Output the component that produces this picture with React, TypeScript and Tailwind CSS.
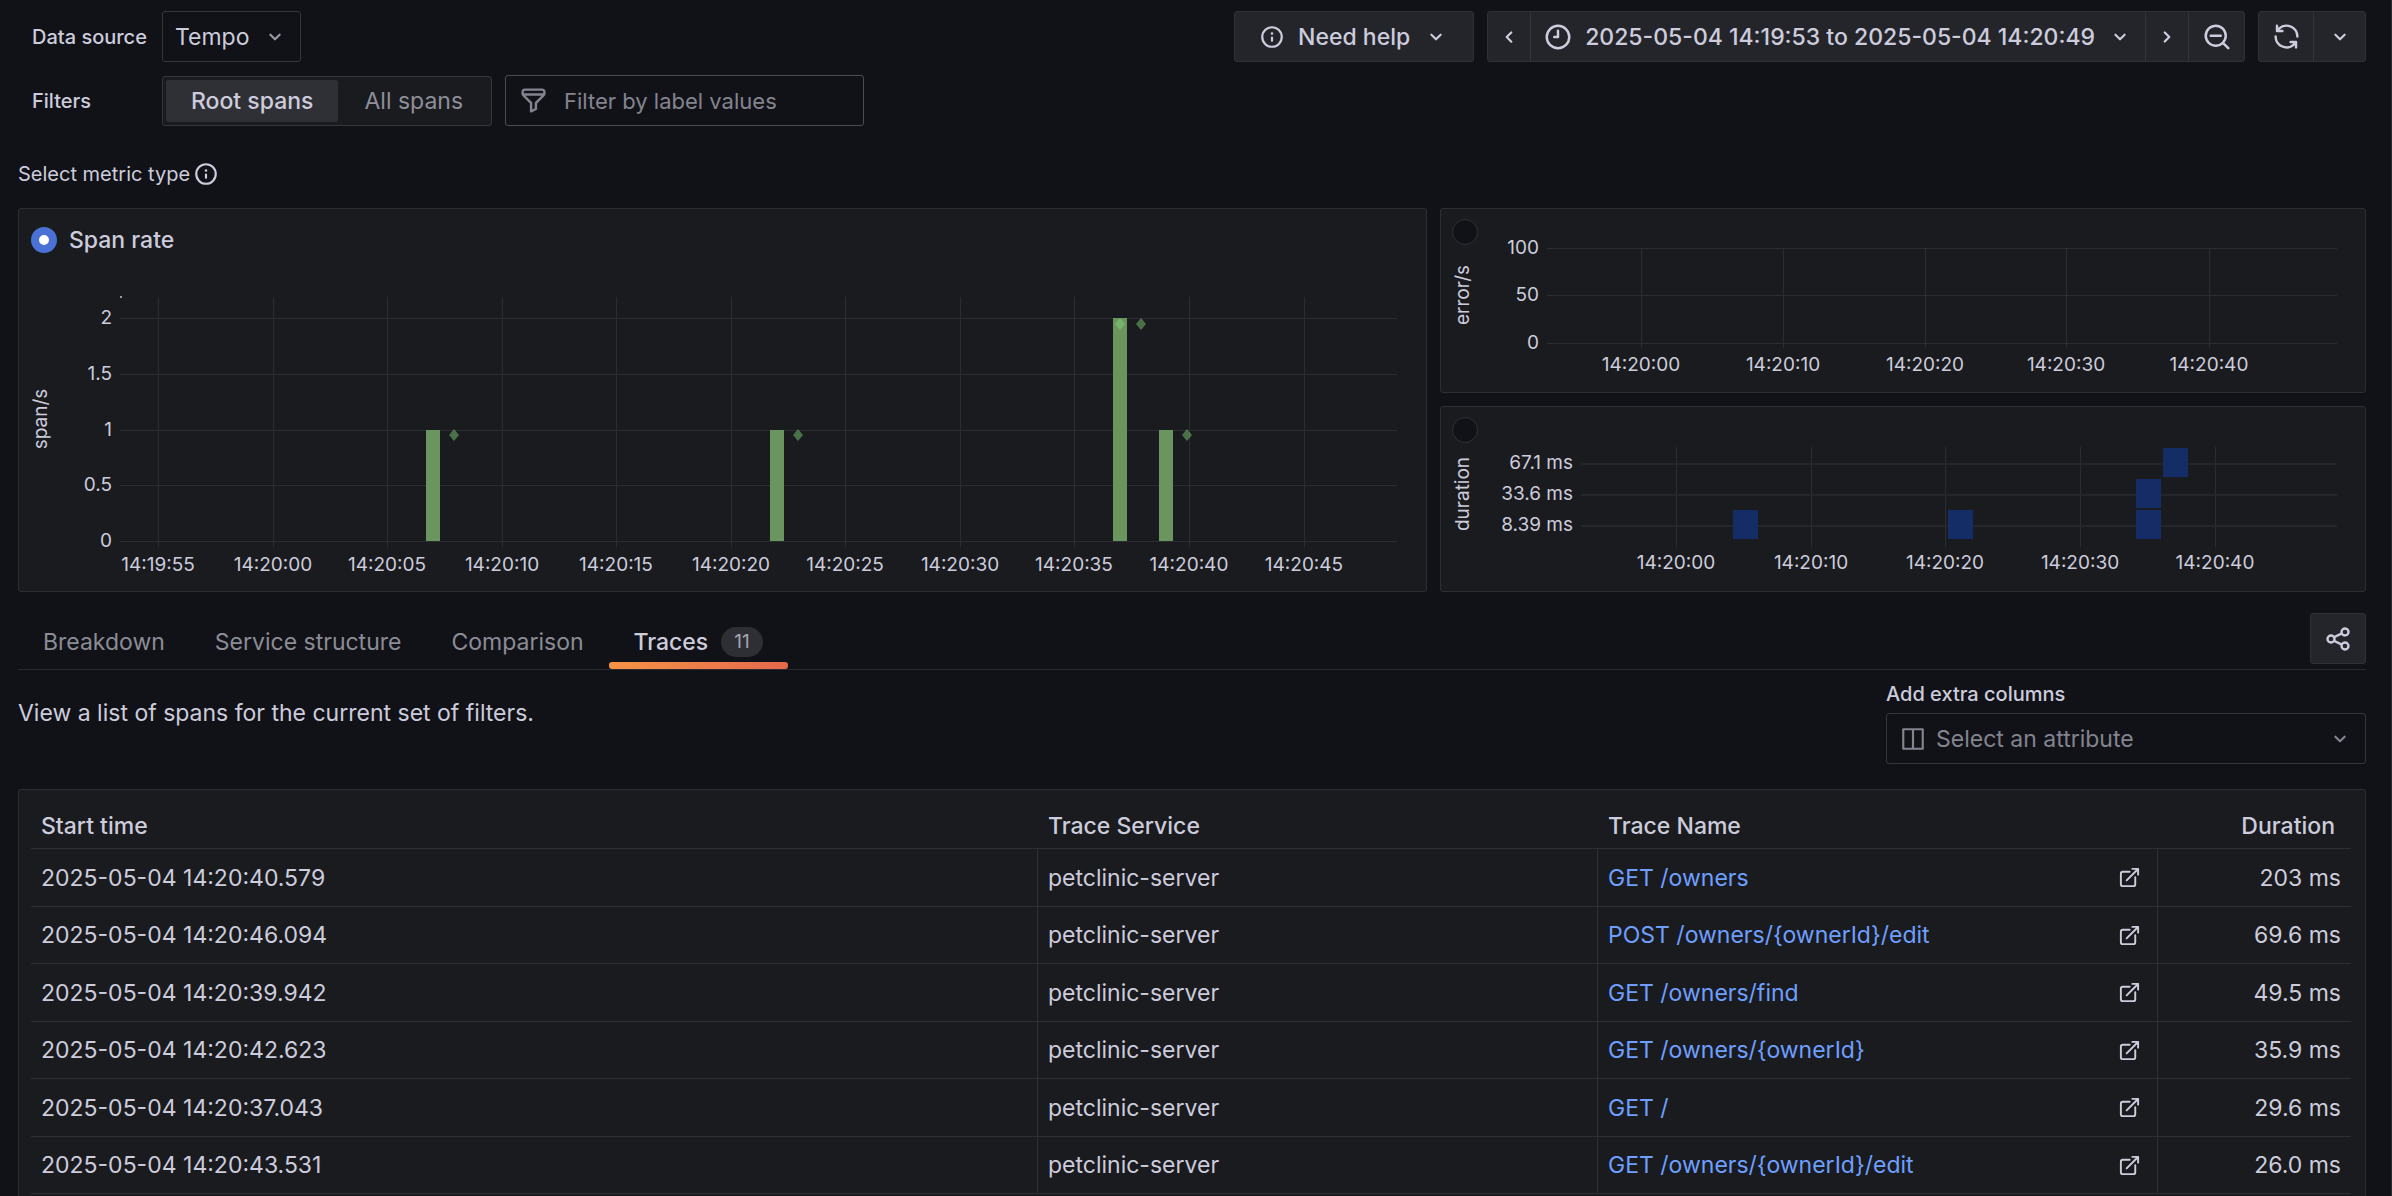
import { useState } from "react";
import type { ReactNode } from "react";

const icons = {
  angleDown:
    "M17,9.17a1,1,0,0,0-1.41,0L12,12.71,8.46,9.17a1,1,0,0,0-1.41,0,1,1,0,0,0,0,1.42l4.24,4.24a1,1,0,0,0,1.42,0L17,10.59A1,1,0,0,0,17,9.17Z",
  angleLeft:
    "M11.29,12l3.54-3.54a1,1,0,0,0,0-1.41,1,1,0,0,0-1.42,0L9.17,11.29a1,1,0,0,0,0,1.42L13.41,17a1,1,0,0,0,.71.29,1,1,0,0,0,.71-.29,1,1,0,0,0,0-1.41Z",
  angleRight:
    "M14.83,11.29,10.59,7.05a1,1,0,0,0-1.42,0,1,1,0,0,0,0,1.41L12.71,12,9.17,15.54a1,1,0,0,0,0,1.41,1,1,0,0,0,.71.29,1,1,0,0,0,.71-.29l4.24-4.24A1,1,0,0,0,14.83,11.29Z",
  info: "M12,2A10,10,0,1,0,22,12,10,10,0,0,0,12,2Zm0,18a8,8,0,1,1,8-8A8,8,0,0,1,12,20Zm0-8.5a1,1,0,0,0-1,1v3a1,1,0,0,0,2,0v-3A1,1,0,0,0,12,11.5Zm0-4a1.25,1.25,0,1,0,1.25,1.25A1.25,1.25,0,0,0,12,7.5Z",
  clock:
    "M12,2A10,10,0,1,0,22,12,10,10,0,0,0,12,2Zm0,18a8,8,0,1,1,8-8A8,8,0,0,1,12,20ZM12,6a1,1,0,0,0-1,1v4H9a1,1,0,0,0,0,2h3a1,1,0,0,0,1-1V7A1,1,0,0,0,12,6Z",
  zoomOut:
    "M21.71,20.29,18,16.61A9,9,0,1,0,16.61,18l3.68,3.68a1,1,0,0,0,1.42,0A1,1,0,0,0,21.71,20.29ZM11,18a7,7,0,1,1,7-7A7,7,0,0,1,11,18Zm4-8H7a1,1,0,0,0,0,2h8a1,1,0,0,0,0-2Z",
  sync: "M19.91,15.51H15.38a1,1,0,0,0,0,2h2.4A8,8,0,0,1,4,12a1,1,0,1,0-2,0,10,10,0,0,0,16.88,7.23V21a1,1,0,0,0,2,0V16.5A1,1,0,0,0,19.91,15.51ZM12,2A10,10,0,0,0,5.12,4.77V3a1,1,0,0,0-2,0V7.5a1,1,0,0,0,1,1h4.5a1,1,0,0,0,0-2H6.22A8,8,0,0,1,20,12a1,1,0,0,0,2,0A10,10,0,0,0,12,2Z",
  share:
    "M18,14a4,4,0,0,0-3.08,1.48l-5.1-2.35a3.64,3.64,0,0,0,0-2.26l5.1-2.35A4,4,0,1,0,14,6a4.17,4.17,0,0,0,.07.71L8.79,9.14a4,4,0,1,0,0,5.72l5.28,2.43A4.17,4.17,0,0,0,14,18a4,4,0,1,0,4-4ZM18,4a2,2,0,1,1-2,2A2,2,0,0,1,18,4ZM6,14a2,2,0,1,1,2-2A2,2,0,0,1,6,14Zm12,6a2,2,0,1,1,2-2A2,2,0,0,1,18,20Z",
  external:
    "M18,10.82a1,1,0,0,0-1,1V19a1,1,0,0,1-1,1H5a1,1,0,0,1-1-1V8A1,1,0,0,1,5,7h7.18a1,1,0,0,0,0-2H5A3,3,0,0,0,2,8V19a3,3,0,0,0,3,3H16a3,3,0,0,0,3-3V11.82A1,1,0,0,0,18,10.82Zm3.92-8.2a1,1,0,0,0-.54-.54A1,1,0,0,0,21,2H15a1,1,0,0,0,0,2h3.59L8.29,14.29a1,1,0,0,0,0,1.42,1,1,0,0,0,1.42,0L20,5.41V9a1,1,0,0,0,2,0V3A1,1,0,0,0,21.92,2.62Z",
  columns:
    "M21,2H3A1,1,0,0,0,2,3V21a1,1,0,0,0,1,1H21a1,1,0,0,0,1-1V3A1,1,0,0,0,21,2ZM11,20H4V4h7Zm9,0H13V4h7Z",
  filter:
    "M19,2H5A3,3,0,0,0,2,5V6.17a3,3,0,0,0,.25,1.2l0,.06a2.81,2.81,0,0,0,.59.86L9,14.41V21a1,1,0,0,0,.47.85A1,1,0,0,0,10,22a1,1,0,0,0,.45-.11l4-2A1,1,0,0,0,15,19V14.41l6.12-6.12a2.81,2.81,0,0,0,.59-.86l0-.06A3,3,0,0,0,22,6.17V5A3,3,0,0,0,19,2ZM13.29,13.29A1,1,0,0,0,13,14v4.38l-2,1V14a1,1,0,0,0-.29-.71L5.41,8H18.59ZM20,6H4V5A1,1,0,0,1,5,4H19a1,1,0,0,1,1,1Z",
};

function Icon({ name, className = "size-[26px]" }: { name: keyof typeof icons; className?: string }) {
  return (
    <svg viewBox="0 0 24 24" fill="currentColor" aria-hidden="true" className={`shrink-0 ${className}`}>
      <path d={icons[name]} />
    </svg>
  );
}

const TEXT = "#ccccdc";
const GRID = "#2c2d32";

type Tick = [pos: number, label: string];

interface AxesProps {
  xTicks: Tick[];
  yTicks: Tick[];
  left: number;
  right: number;
  top: number;
  bottom: number;
  labelY: number;
  thick?: boolean;
}

/* Grid lines with their tick labels. */
function Axes({ xTicks, yTicks, left, right, top, bottom, labelY, thick }: AxesProps) {
  return (
    <g>
      <g fill={GRID} shapeRendering="crispEdges">
        {xTicks.map(([x, label]) => (
          <rect key={label} x={x} y={top} width={1} height={bottom - top} />
        ))}
        {yTicks.map(([y, label]) => (
          <rect key={label} x={left} y={y} width={right - left} height={thick ? 2 : 1} fill={thick ? "#25262a" : GRID} />
        ))}
      </g>
      <g fill={TEXT} fontSize={19}>
        {xTicks.map(([x, label]) => (
          <text key={label} x={x} y={labelY} textAnchor="middle">
            {label}
          </text>
        ))}
        {yTicks.map(([y, label]) => (
          <text key={label} x={left - 8} y={y + 6} textAnchor="end">
            {label}
          </text>
        ))}
      </g>
    </g>
  );
}

function AxisTitle({ x, y, children }: { x: number; y: number; children: string }) {
  return (
    <text transform={`translate(${x} ${y}) rotate(-90)`} textAnchor="middle" fill={TEXT} fontSize={19}>
      {children}
    </text>
  );
}

function SpanRateChart() {
  const xTicks: Tick[] = [
    [139, "14:19:55"],
    [254, "14:20:00"],
    [368, "14:20:05"],
    [483, "14:20:10"],
    [597, "14:20:15"],
    [712, "14:20:20"],
    [826, "14:20:25"],
    [941, "14:20:30"],
    [1055, "14:20:35"],
    [1170, "14:20:40"],
    [1285, "14:20:45"],
  ];
  const yTicks: Tick[] = [
    [48, "2"],
    [104, "1.5"],
    [160, "1"],
    [215, "0.5"],
    [271, "0"],
  ];
  const bars = [
    [407, 160],
    [751, 160],
    [1094, 48],
    [1140, 160],
  ];
  const diamonds = [
    [435, 165],
    [779, 165],
    [1101, 54],
    [1122, 54],
    [1168, 165],
  ];
  return (
    <svg viewBox="0 0 1407 321" className="block w-full" role="img" aria-label="Span rate chart">
      <Axes xTicks={xTicks} yTicks={yTicks} left={101} right={1378} top={27} bottom={277} labelY={301} />
      <rect x={101} y={26} width={2} height={2} fill="#9a9aa5" />
      {bars.map(([x, y]) => (
        <rect key={x} x={x} y={y} width={14} height={271 - y} fill="#6a955f" />
      ))}
      {diamonds.map(([x, y]) => (
        <path key={x} d={`M${x} ${y - 6}l5 6l-5 6l-5 -6z`} fill="#84d977" fillOpacity={0.45} />
      ))}
      <AxisTitle x={28} y={149}>
        span/s
      </AxisTitle>
    </svg>
  );
}

function ErrorChart() {
  return (
    <svg viewBox="0 0 924 183" className="block w-full" role="img" aria-label="Error rate chart">
      <Axes
        xTicks={[
          [200, "14:20:00"],
          [342, "14:20:10"],
          [484, "14:20:20"],
          [625, "14:20:30"],
          [768, "14:20:40"],
        ]}
        yTicks={[
          [39, "100"],
          [86, "50"],
          [134, "0"],
        ]}
        left={106}
        right={896}
        top={39}
        bottom={139}
        labelY={162}
      />
      <AxisTitle x={28} y={86}>
        error/s
      </AxisTitle>
    </svg>
  );
}

function DurationChart() {
  const cells = [
    [292, 103],
    [507, 103],
    [695, 103],
    [695, 72],
    [722, 41],
  ];
  return (
    <svg viewBox="0 0 924 184" className="block w-full" role="img" aria-label="Duration heatmap">
      <Axes
        xTicks={[
          [235, "14:20:00"],
          [370, "14:20:10"],
          [504, "14:20:20"],
          [639, "14:20:30"],
          [774, "14:20:40"],
        ]}
        yTicks={[
          [56, "67.1 ms"],
          [87, "33.6 ms"],
          [118, "8.39 ms"],
        ]}
        left={140}
        right={896}
        top={40}
        bottom={140}
        labelY={162}
        thick
      />
      {cells.map(([x, y]) => (
        <rect key={`${x}-${y}`} x={x} y={y} width={25} height={29} fill="#142d66" />
      ))}
      <AxisTitle x={28} y={87}>
        duration
      </AxisTitle>
    </svg>
  );
}

const radioClass =
  "size-[26px] shrink-0 appearance-none rounded-full border border-[#303136] bg-[#111217] checked:border-8 checked:border-[#4a72d6] checked:bg-white";

function ToolButton({ label, className, children }: { label: string; className: string; children: ReactNode }) {
  return (
    <button type="button" aria-label={label} className={`flex items-center justify-center ${className}`}>
      {children}
    </button>
  );
}

const groupClass =
  "flex h-[51px] divide-x divide-[#34353b] overflow-hidden rounded-[3px] border border-[#303137] bg-[#24252b]";

const traces = [
  ["2025-05-04 14:20:40.579", "GET /owners", "203 ms"],
  ["2025-05-04 14:20:46.094", "POST /owners/{ownerId}/edit", "69.6 ms"],
  ["2025-05-04 14:20:39.942", "GET /owners/find", "49.5 ms"],
  ["2025-05-04 14:20:42.623", "GET /owners/{ownerId}", "35.9 ms"],
  ["2025-05-04 14:20:37.043", "GET /", "29.6 ms"],
  ["2025-05-04 14:20:43.531", "GET /owners/{ownerId}/edit", "26.0 ms"],
];

const tabs = ["Breakdown", "Service structure", "Comparison", "Traces"];

export default function App() {
  const [metric, setMetric] = useState("rate");
  const [scope, setScope] = useState("Root spans");
  const [tab, setTab] = useState("Traces");

  return (
    <main className="flex h-screen flex-col overflow-hidden border-r border-[#2a2b30] bg-[#111217] pt-[11px] pr-[25px] pl-[18px] font-['Inter',sans-serif] text-[23px] leading-[34px] text-[#ccccdc]">
      <header className="flex flex-col gap-[13px]">
        <div className="flex items-center justify-between">
          <div className="flex items-center">
            <label htmlFor="source" className="w-[144px] pl-[14px] text-[20px] font-medium">
              Data source
            </label>
            <div className="relative">
              <select
                id="source"
                className="block h-[51px] w-[139px] appearance-none rounded-[3px] border border-[#35363c] bg-[#111217] pl-[12px]"
              >
                <option>Tempo</option>
              </select>
              <span className="pointer-events-none absolute inset-y-0 right-[13px] flex items-center text-[#9a9ba6]">
                <Icon name="angleDown" />
              </span>
            </div>
          </div>

          <div className="flex gap-[13px] font-medium">
            <button
              type="button"
              className="flex h-[51px] items-center gap-[13px] rounded-[3px] border border-[#303137] bg-[#24252b] px-[24px]"
            >
              <Icon name="info" />
              Need help
              <Icon name="angleDown" />
            </button>
            <div className={groupClass}>
              <ToolButton label="Move time range backwards" className="w-[43px]">
                <Icon name="angleLeft" />
              </ToolButton>
              <button type="button" className="flex items-center gap-[12px] px-[12px]">
                <Icon name="clock" className="size-[30px]" />
                2025-05-04 14:19:53 to 2025-05-04 14:20:49
                <Icon name="angleDown" />
              </button>
              <ToolButton label="Move time range forwards" className="w-[43px]">
                <Icon name="angleRight" />
              </ToolButton>
              <ToolButton label="Zoom out time range" className="w-[55px]">
                <Icon name="zoomOut" className="size-[30px]" />
              </ToolButton>
            </div>
            <div className={groupClass}>
              <ToolButton label="Refresh" className="w-[55px]">
                <Icon name="sync" className="size-[29px]" />
              </ToolButton>
              <ToolButton label="Auto refresh interval" className="w-[51px]">
                <Icon name="angleDown" />
              </ToolButton>
            </div>
          </div>
        </div>

        <div className="flex items-center">
          <span id="filters-label" className="w-[144px] pl-[14px] text-[20px] font-medium">
            Filters
          </span>
          <div
            role="radiogroup"
            aria-labelledby="filters-label"
            className="flex h-[50px] gap-px rounded-[3px] border border-[#35363c] bg-[#1a1b1f] p-[3px]"
          >
            {["Root spans", "All spans"].map((option) => (
              <label
                key={option}
                className="flex cursor-pointer items-center rounded-[3px] px-[25px] text-[#8e8f9a] has-checked:bg-[#2f3035] has-checked:font-medium has-checked:text-[#ccccdc]"
              >
                <input
                  type="radio"
                  name="scope"
                  className="sr-only"
                  checked={scope === option}
                  onChange={() => setScope(option)}
                />
                {option}
              </label>
            ))}
          </div>
          <label className="ml-[13px] flex h-[51px] w-[359px] items-center gap-[16px] rounded-[3px] border border-[#4b4c53] px-[13px] text-[22px] text-[#83848f]">
            <Icon name="filter" className="size-[29px]" />
            <input
              type="text"
              aria-label="Filter by label values"
              placeholder="Filter by label values"
              className="w-full min-w-0 bg-transparent outline-none placeholder:text-[#83848f]"
            />
          </label>
        </div>
      </header>

      <h2 className="mt-[33px] flex h-[30px] items-center gap-[3px] text-[20px]">
        Select metric type
        <Icon name="info" />
      </h2>

      <section className="mt-[19px] grid shrink-0 grid-cols-[1409fr_926fr] items-start gap-[13px]">
        <div className="rounded-[3px] border border-[#2d2e33] bg-[#1a1b1f]">
          <label className="flex h-[61px] items-center gap-[12px] px-[12px] font-medium">
            <input
              type="radio"
              name="metric"
              className={radioClass}
              checked={metric === "rate"}
              onChange={() => setMetric("rate")}
            />
            Span rate
          </label>
          <SpanRateChart />
        </div>
        <div className="flex flex-col gap-[13px]">
          <div className="relative rounded-[3px] border border-[#2d2e33] bg-[#1a1b1f]">
            <input
              type="radio"
              name="metric"
              aria-label="Errors rate"
              className={`absolute top-[10px] left-[11px] ${radioClass}`}
              checked={metric === "errors"}
              onChange={() => setMetric("errors")}
            />
            <ErrorChart />
          </div>
          <div className="relative rounded-[3px] border border-[#2d2e33] bg-[#1a1b1f]">
            <input
              type="radio"
              name="metric"
              aria-label="Duration"
              className={`absolute top-[10px] left-[11px] ${radioClass}`}
              checked={metric === "duration"}
              onChange={() => setMetric("duration")}
            />
            <DurationChart />
          </div>
        </div>
      </section>

      <nav className="mt-[21px] flex h-[57px] shrink-0 items-start justify-between border-b border-[#2a2b31]">
        <div role="tablist" className="flex h-full">
          {tabs.map((name) => (
            <button
              key={name}
              type="button"
              role="tab"
              aria-selected={tab === name}
              onClick={() => setTab(name)}
              className={`relative flex items-center gap-[13px] px-[25px] pt-[2px] ${
                tab === name ? "font-medium text-[#ccccdc]" : "text-[#8b8c96]"
              }`}
            >
              {name}
              {name === "Traces" && (
                <span className="flex h-[30px] items-center rounded-full bg-[#2e2f35] px-[13px] text-[19px] font-normal text-[#a3a4b0]">
                  11
                </span>
              )}
              {tab === name && (
                <span className="absolute inset-x-0 bottom-0 h-[7px] rounded-[3px] bg-linear-to-r from-[#f59345] to-[#e5684b]" />
              )}
            </button>
          ))}
        </div>
        <button
          type="button"
          aria-label="Share"
          className="flex h-[51px] w-[56px] items-center justify-center rounded-[3px] border border-[#303137] bg-[#24252b]"
        >
          <Icon name="share" className="size-[28px]" />
        </button>
      </nav>

      <div className="flex items-start justify-between">
        <p className="pt-[26px]">View a list of spans for the current set of filters.</p>
        <div className="flex w-[480px] flex-col gap-[2px] pt-[7px]">
          <label htmlFor="columns" className="block text-[20px] font-medium">
            Add extra columns
          </label>
          <div className="relative text-[#83848f]">
            <select
              id="columns"
              className="block h-[51px] w-full appearance-none rounded-[3px] border border-[#35363c] bg-[#111217] pl-[49px]"
            >
              <option>Select an attribute</option>
            </select>
            <span className="pointer-events-none absolute inset-y-0 right-[13px] left-[14px] flex items-center justify-between">
              <Icon name="columns" />
              <Icon name="angleDown" />
            </span>
          </div>
        </div>
      </div>

      <section className="mt-[25px] min-h-0 flex-1 overflow-hidden rounded-t-[3px] border border-b-0 border-[#2d2e33] bg-[#1a1b1f] pt-[13px] pr-[14px] pl-[12px]">
        <table className="w-full table-fixed border-separate border-spacing-0">
          <colgroup>
            <col />
            <col className="w-[560px]" />
            <col className="w-[560px]" />
            <col className="w-[193px]" />
          </colgroup>
          <thead>
            <tr className="h-[46px] text-left *:border-b *:border-[#2f3035] *:px-[10px] *:py-0 *:font-medium">
              <th scope="col">Start time</th>
              <th scope="col">Trace Service</th>
              <th scope="col">Trace Name</th>
              <th scope="col" className="pr-[16px]! text-right">
                Duration
              </th>
            </tr>
          </thead>
          <tbody>
            {traces.map(([time, name, duration]) => (
              <tr
                key={time}
                className="*:border-r *:border-b *:border-[#2f3035] *:px-[10px] *:py-0 odd:h-[58px] even:h-[57px] *:last:border-r-0"
              >
                <td>{time}</td>
                <td>petclinic-server</td>
                <td>
                  <div className="flex items-center justify-between pr-[6px]">
                    <a href="#trace" className="text-[#6e9fff]">
                      {name}
                    </a>
                    <a href="#trace" aria-label={`Open ${name} in new tab`}>
                      <Icon name="external" className="size-[23px]" />
                    </a>
                  </div>
                </td>
                <td className="text-right">{duration}</td>
              </tr>
            ))}
          </tbody>
        </table>
      </section>
    </main>
  );
}
